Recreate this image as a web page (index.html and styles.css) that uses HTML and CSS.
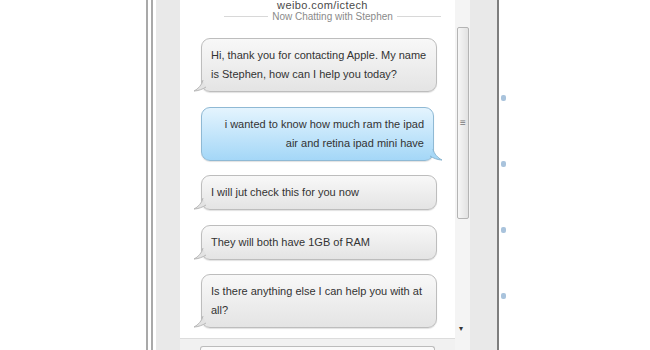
FILE: index.html
```html
<!DOCTYPE html>
<html lang="en">
<head>
    <meta charset="UTF-8">
    <title>Now Chatting with Stephen</title>
    <link rel="stylesheet" href="styles.css">
</head>
<body>
    <div class="window">
        <div class="frame-left">
            <div class="rule"></div>
            <div class="rule"></div>
            <div class="side-panel"></div>
        </div>

        <div class="chat">
            <div class="chat-header">
                <div class="site">weibo.com/ictech</div>
                <div class="now-chatting"><span>Now Chatting with Stephen</span></div>
            </div>

            <div class="messages">
                <div class="bubble agent">
                    Hi, thank you for contacting Apple. My name is Stephen, how can I help you today?
                    <svg class="tail" width="14" height="14" viewBox="0 0 14 14"><path d="M10 1 C9 6 5 10 1 12 C5 12 10 10 13 8" fill="#e3e3e3" stroke="#b8b8b8" stroke-width="1"/></svg>
                </div>
                <div class="bubble customer">
                    i wanted to know how much ram the ipad air and retina ipad mini have
                    <svg class="tail" width="14" height="14" viewBox="0 0 14 14"><path d="M4 1 C5 6 9 10 13 12 C9 12 4 10 1 8" fill="#a7d8f7" stroke="#8bb6d0" stroke-width="1"/></svg>
                </div>
                <div class="bubble agent">
                    I will jut check this for you now
                    <svg class="tail" width="14" height="14" viewBox="0 0 14 14"><path d="M10 1 C9 6 5 10 1 12 C5 12 10 10 13 8" fill="#e3e3e3" stroke="#b8b8b8" stroke-width="1"/></svg>
                </div>
                <div class="bubble agent">
                    They will both have 1GB of RAM
                    <svg class="tail" width="14" height="14" viewBox="0 0 14 14"><path d="M10 1 C9 6 5 10 1 12 C5 12 10 10 13 8" fill="#e3e3e3" stroke="#b8b8b8" stroke-width="1"/></svg>
                </div>
                <div class="bubble agent">
                    Is there anything else I can help you with at all?
                    <svg class="tail" width="14" height="14" viewBox="0 0 14 14"><path d="M10 1 C9 6 5 10 1 12 C5 12 10 10 13 8" fill="#e3e3e3" stroke="#b8b8b8" stroke-width="1"/></svg>
                </div>
            </div>

            <div class="input-bar">
                <div class="input-box"></div>
            </div>
        </div>

        <div class="scrollbar">
            <div class="track">
                <div class="thumb"><span class="grip">&#8801;</span></div>
                <span class="arrow">&#9662;</span>
            </div>
        </div>

        <div class="frame-right">
            <div class="side-panel"></div>
            <div class="rule dark"></div>
        </div>

        <div class="outside">
            <span class="dot"></span>
            <span class="dot"></span>
            <span class="dot"></span>
            <span class="dot"></span>
        </div>
    </div>
</body>
</html>
```

FILE: styles.css
```css
/* Reset */
* {
    margin: 0;
    padding: 0;
    box-sizing: border-box;
}

body {
    background: #fff;
    font-family: 'Liberation Sans', Arial, sans-serif;
    width: 650px;
    height: 350px;
    overflow: hidden;
}

/* Janela principal */
.window {
    display: flex;
    height: 350px;
    margin-left: 146px;
}

/* Moldura da esquerda */
.frame-left {
    display: flex;
    width: 34px;
}

.frame-left .rule {
    width: 2px;
    background: #a9a9a9;
    margin-right: 3px;
}

.side-panel {
    flex: 1;
    background: #e9e9e9;
}

/* Área do chat */
.chat {
    width: 275px;
    display: flex;
    flex-direction: column;
    background: #fff;
}

.chat-header {
    text-align: center;
    height: 26px;
}

.site {
    font-size: 11px;
    color: #4a4a4a;
    line-height: 11px;
    letter-spacing: 0.4px;
    padding-left: 10px;
}

.now-chatting {
    display: flex;
    align-items: center;
    gap: 4px;
    font-size: 10px;
    color: #8a8a8a;
    line-height: 11px;
    padding: 0 14px 0 44px;
}

.now-chatting::before,
.now-chatting::after {
    content: '';
    flex: 1;
    height: 1px;
    background: #d8d8d8;
}

/* Mensagens */
.messages {
    flex: 1;
    display: flex;
    flex-direction: column;
    gap: 14.5px;
    padding: 12px 18px 0 21px;
}

.bubble {
    position: relative;
    font-size: 11px;
    line-height: 19px;
    color: #333;
    padding: 7px 9px 7px 9px;
    border-radius: 9px;
    border: 1px solid #bdbdbd;
    background: linear-gradient(#f8f8f8, #e4e4e4);
    box-shadow: 0 1px 1px rgba(0, 0, 0, 0.12);
}

.bubble.agent {
    width: 236px;
}

.bubble.customer {
    width: 233px;
    text-align: right;
    padding-right: 9px;
    border-color: #8fb9d4;
    background: linear-gradient(#e4f4fe, #a4d7f7);
}

.bubble .tail {
    position: absolute;
    bottom: -2px;
}

.bubble.agent .tail {
    left: -9px;
}

.bubble.customer .tail {
    right: -10px;
}

/* Barra de digitação */
.input-bar {
    height: 12px;
    border-top: 1px solid #dcdcdc;
    background: #f1f1f1;
    padding: 7px 0 0 20px;
}

.input-box {
    height: 10px;
    width: 235px;
    border: 1px solid #bcbcbc;
    border-bottom: none;
    border-radius: 3px 3px 0 0;
    background: #fafafa;
}

/* Barra de rolagem */
.scrollbar {
    width: 15px;
    background: #f4f4f4;
    padding: 27px 1px 0 2px;
}

.track {
    position: relative;
    height: 100%;
}

.thumb {
    height: 192px;
    border: 1px solid #b4b4b4;
    border-radius: 2px;
    background: linear-gradient(90deg, #f6f6f6, #e2e2e2);
    display: flex;
    align-items: center;
    justify-content: center;
}

.grip {
    font-size: 10px;
    color: #777;
    line-height: 10px;
}

.arrow {
    position: absolute;
    left: 2px;
    top: 297px;
    font-size: 8px;
    color: #333;
}

/* Moldura da direita */
.frame-right {
    display: flex;
    width: 29px;
}

.frame-right .rule.dark {
    width: 2px;
    background: #7e7e7e;
}

/* Conteúdo fora da janela */
.outside {
    display: flex;
    flex-direction: column;
    padding: 95px 0 0 2px;
    gap: 60px;
}

.dot {
    display: block;
    width: 5px;
    height: 6px;
    border-radius: 2px;
    background: #a9c3dc;
}
```
